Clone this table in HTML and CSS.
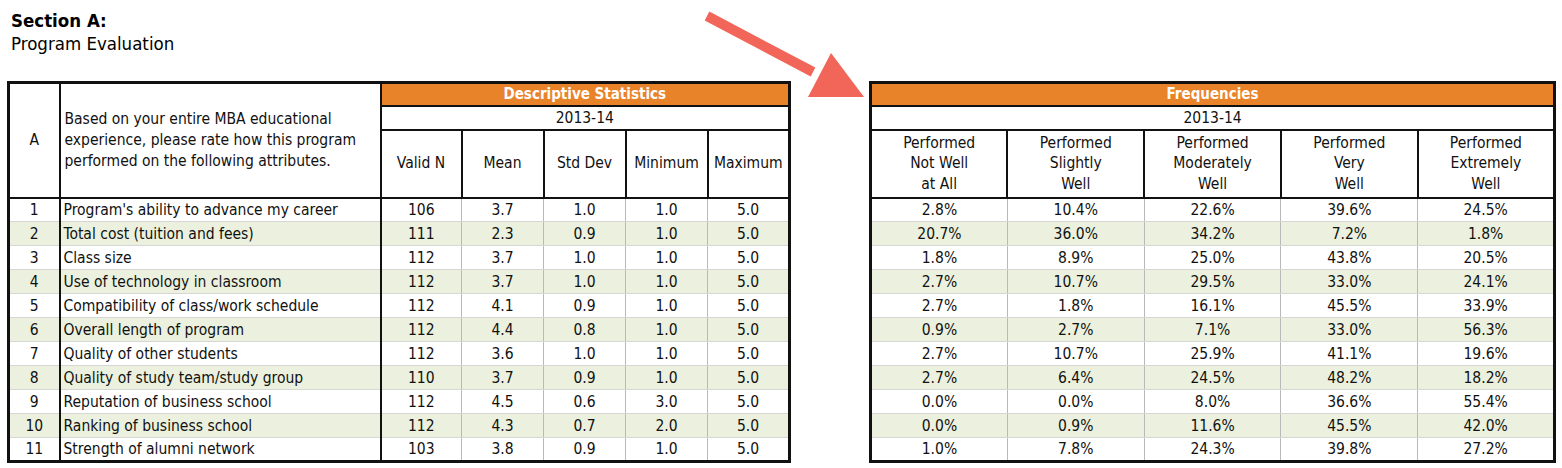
FILE: index.html
```html
<!DOCTYPE html>
<html>
<head>
<meta charset="utf-8">
<link rel="stylesheet" href="styles.css">
</head>
<body>
<div class="page">
  <div class="title">
    <div class="title-main">Section A:</div>
    <div class="title-sub">Program Evaluation</div>
  </div>
  <div class="tables">
    <table class="tbl left">
      <colgroup>
        <col class="c-a"><col class="c-q"><col class="c-n"><col class="c-s"><col class="c-s"><col class="c-s"><col class="c-s">
      </colgroup>
      <thead>
        <tr class="r-band">
          <th class="hq hq-a" rowspan="3">A</th>
          <th class="hq hq-q" rowspan="3">Based on your entire MBA educational<br>experience, please rate how this program<br>performed on the following attributes.</th>
          <th class="band" colspan="5">Descriptive Statistics</th>
        </tr>
        <tr class="r-year"><th class="year" colspan="5">2013-14</th></tr>
        <tr class="r-head">
          <th class="ch">Valid N</th><th class="ch">Mean</th><th class="ch">Std Dev</th><th class="ch">Minimum</th><th class="ch">Maximum</th>
        </tr>
      </thead>
      <tbody>
        <tr><td class="num">1</td><td class="q">Program's ability to advance my career</td><td>106</td><td>3.7</td><td>1.0</td><td>1.0</td><td>5.0</td></tr>
        <tr class="alt"><td class="num">2</td><td class="q">Total cost (tuition and fees)</td><td>111</td><td>2.3</td><td>0.9</td><td>1.0</td><td>5.0</td></tr>
        <tr><td class="num">3</td><td class="q">Class size</td><td>112</td><td>3.7</td><td>1.0</td><td>1.0</td><td>5.0</td></tr>
        <tr class="alt"><td class="num">4</td><td class="q">Use of technology in classroom</td><td>112</td><td>3.7</td><td>1.0</td><td>1.0</td><td>5.0</td></tr>
        <tr><td class="num">5</td><td class="q">Compatibility of class/work schedule</td><td>112</td><td>4.1</td><td>0.9</td><td>1.0</td><td>5.0</td></tr>
        <tr class="alt"><td class="num">6</td><td class="q">Overall length of program</td><td>112</td><td>4.4</td><td>0.8</td><td>1.0</td><td>5.0</td></tr>
        <tr><td class="num">7</td><td class="q">Quality of other students</td><td>112</td><td>3.6</td><td>1.0</td><td>1.0</td><td>5.0</td></tr>
        <tr class="alt"><td class="num">8</td><td class="q">Quality of study team/study group</td><td>110</td><td>3.7</td><td>0.9</td><td>1.0</td><td>5.0</td></tr>
        <tr><td class="num">9</td><td class="q">Reputation of business school</td><td>112</td><td>4.5</td><td>0.6</td><td>3.0</td><td>5.0</td></tr>
        <tr class="alt"><td class="num">10</td><td class="q">Ranking of business school</td><td>112</td><td>4.3</td><td>0.7</td><td>2.0</td><td>5.0</td></tr>
        <tr><td class="num">11</td><td class="q">Strength of alumni network</td><td>103</td><td>3.8</td><td>0.9</td><td>1.0</td><td>5.0</td></tr>
      </tbody>
    </table>

    <table class="tbl right">
      <colgroup>
        <col class="c-f"><col class="c-f"><col class="c-f"><col class="c-f"><col class="c-f">
      </colgroup>
      <thead>
        <tr class="r-band"><th class="band" colspan="5">Frequencies</th></tr>
        <tr class="r-year"><th class="year" colspan="5">2013-14</th></tr>
        <tr class="r-head">
          <th class="ch">Performed<br>Not Well<br>at All</th>
          <th class="ch">Performed<br>Slightly<br>Well</th>
          <th class="ch">Performed<br>Moderately<br>Well</th>
          <th class="ch">Performed<br>Very<br>Well</th>
          <th class="ch">Performed<br>Extremely<br>Well</th>
        </tr>
      </thead>
      <tbody>
        <tr><td>2.8%</td><td>10.4%</td><td>22.6%</td><td>39.6%</td><td>24.5%</td></tr>
        <tr class="alt"><td>20.7%</td><td>36.0%</td><td>34.2%</td><td>7.2%</td><td>1.8%</td></tr>
        <tr><td>1.8%</td><td>8.9%</td><td>25.0%</td><td>43.8%</td><td>20.5%</td></tr>
        <tr class="alt"><td>2.7%</td><td>10.7%</td><td>29.5%</td><td>33.0%</td><td>24.1%</td></tr>
        <tr><td>2.7%</td><td>1.8%</td><td>16.1%</td><td>45.5%</td><td>33.9%</td></tr>
        <tr class="alt"><td>0.9%</td><td>2.7%</td><td>7.1%</td><td>33.0%</td><td>56.3%</td></tr>
        <tr><td>2.7%</td><td>10.7%</td><td>25.9%</td><td>41.1%</td><td>19.6%</td></tr>
        <tr class="alt"><td>2.7%</td><td>6.4%</td><td>24.5%</td><td>48.2%</td><td>18.2%</td></tr>
        <tr><td>0.0%</td><td>0.0%</td><td>8.0%</td><td>36.6%</td><td>55.4%</td></tr>
        <tr class="alt"><td>0.0%</td><td>0.9%</td><td>11.6%</td><td>45.5%</td><td>42.0%</td></tr>
        <tr><td>1.0%</td><td>7.8%</td><td>24.3%</td><td>39.8%</td><td>27.2%</td></tr>
      </tbody>
    </table>
  </div>

  <svg class="arrow" width="180" height="110" viewBox="0 0 180 110" aria-hidden="true">
    <line x1="26" y1="16" x2="132" y2="72" stroke="#f2665a" stroke-width="10"/>
    <polygon points="150,53 127,97 183,97" fill="#f2665a"/>
  </svg>
</div>
</body>
</html>
```

FILE: styles.css
```css
* { box-sizing: border-box; }

html, body {
  margin: 0;
  padding: 0;
  background: #ffffff;
}

body {
  font-family: "DejaVu Sans Condensed", "DejaVu Sans", sans-serif;
  color: #111;
  width: 1562px;
  height: 468px;
  overflow: hidden;
}

.page {
  position: relative;
  padding: 9px 0 0 7px;
}

.title {
  padding-left: 4px;
  font-size: 18.5px;
  line-height: 23px;
  color: #000;
}

.title-main { font-weight: bold; }

.tables {
  display: flex;
  align-items: flex-start;
  gap: 78px;
  margin-top: 26px;
}

.tbl {
  border-collapse: collapse;
  table-layout: fixed;
  border: 3px solid #111;
  font-size: 15.5px;
}

.left { width: 784px; }
.right { width: 684px; }

.c-a { width: 51px; }
.c-q { width: 321px; }
.c-n { width: 81px; }
.c-s { width: 82px; }
.c-f { width: 136.8px; }

.tbl th {
  font-weight: normal;
  padding: 0;
  white-space: nowrap;
}

.r-band th { height: 23px; }
.r-year th { height: 24px; }
.r-head th { height: 68px; }

.band {
  background: #e9832a;
  color: #fff;
  font-weight: bold !important;
  text-align: center;
  border: 2px solid #111;
  font-size: 15px;
}

.year {
  border: 2px solid #111;
  text-align: center;
}

.ch {
  border: 2px solid #111;
  text-align: center;
  line-height: 20.5px;
  vertical-align: middle;
}

.hq {
  border: 2px solid #111;
  vertical-align: middle;
}

.hq-a { text-align: center; }

.hq-q {
  text-align: left;
  padding: 0 0 0 4px !important;
  line-height: 21px;
}

.tbl td {
  height: 24px;
  padding: 0;
  text-align: center;
  border-left: 1px solid #b9b9b9;
  border-right: 1px solid #b9b9b9;
  border-top: 1px solid #d6d6d6;
  border-bottom: 1px solid #d6d6d6;
  white-space: nowrap;
}

.tbl tbody tr:first-child td { border-top: 2px solid #111; }

.tbl td.num { border-right: 2px solid #111; }

.tbl td.q {
  text-align: left;
  padding-left: 3px;
  border-right: 2px solid #111;
}

.tbl tr.alt td { background: #ebf1de; }

.arrow {
  position: absolute;
  left: 681px;
  top: 0;
  overflow: visible;
}
```
